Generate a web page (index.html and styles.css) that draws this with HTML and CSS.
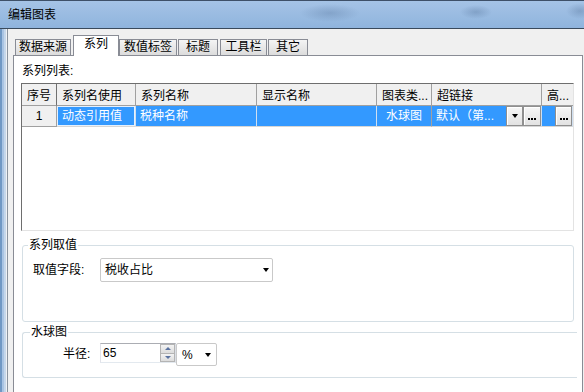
FILE: index.html
```html
<!DOCTYPE html>
<html lang="zh-CN">
<head>
    <meta charset="UTF-8">
    <title>编辑图表</title>
    <link rel="stylesheet" href="styles.css">
</head>
<body>
    <div class="titlebar"><span class="title">编辑图表</span></div>
    <div class="frame">
        <div class="frame-edge"></div>
        <div class="client">
            <div class="tabs">
                <div class="tab t1">数据来源</div>
                <div class="tab t2 active">系列</div>
                <div class="tab t3">数值标签</div>
                <div class="tab t4">标题</div>
                <div class="tab t5">工具栏</div>
                <div class="tab t6">其它</div>
            </div>
            <div class="tab-panel">
                <div class="list-label">系列列表:</div>
                <div class="grid">
                    <div class="row head">
                        <div class="cell first">序号</div>
                        <div class="cell">系列名使用</div>
                        <div class="cell">系列名称</div>
                        <div class="cell">显示名称</div>
                        <div class="cell">图表类...</div>
                        <div class="cell">超链接</div>
                        <div class="cell last">高...</div>
                    </div>
                    <div class="row data">
                        <div class="cell num">1</div>
                        <div class="cell focus">动态引用值</div>
                        <div class="cell">税种名称</div>
                        <div class="cell"></div>
                        <div class="cell center">水球图</div>
                        <div class="cell link">
                            <span class="link-text">默认（第...</span>
                            <span class="btn dd"><span class="tri"></span></span>
                            <span class="btn dots"><i></i><i></i><i></i></span>
                        </div>
                        <div class="cell link last">
                            <span class="link-text"></span>
                            <span class="btn dots"><i></i><i></i><i></i></span>
                        </div>
                    </div>
                </div>

                <fieldset class="group g1">
                    <legend>系列取值</legend>
                    <div class="field f1">
                        <span class="field-label">取值字段:</span>
                        <div class="combo wide"><span>税收占比</span><span class="tri"></span></div>
                    </div>
                </fieldset>

                <fieldset class="group g2">
                    <legend>水球图</legend>
                    <div class="field f2">
                        <span class="field-label">半径:</span>
                        <div class="spin">
                            <span class="spin-value">65</span>
                            <span class="spin-btns">
                                <span class="spin-up"><span class="up"></span></span>
                                <span class="spin-down"><span class="down"></span></span>
                            </span>
                        </div>
                        <div class="combo unit"><span>%</span><span class="tri"></span></div>
                    </div>
                </fieldset>
            </div>
        </div>
    </div>
</body>
</html>
```
FILE: styles.css
```css
* {
    box-sizing: border-box;
}

body {
    margin: 0;
    width: 584px;
    height: 392px;
    overflow: hidden;
    background-color: #f0f0f0;
    font-family: "Liberation Sans", "Noto Sans CJK SC", sans-serif;
    font-size: 12px;
    line-height: 14px;
    color: #000;
}

/* window title */
.titlebar {
    height: 29px;
    padding: 7px 0 0 8px;
    border-top: 1px solid #3e5068;
    border-bottom: 1px solid #3a4a5c;
    background:
        radial-gradient(ellipse 30px 9px at 330px 12px, rgba(60, 90, 130, 0.25), transparent),
        radial-gradient(ellipse 16px 7px at 476px 11px, rgba(60, 90, 130, 0.28), transparent),
        radial-gradient(ellipse 14px 8px at 580px 10px, rgba(60, 90, 130, 0.28), transparent),
        linear-gradient(#a5c3e6, #8fb4dd);
}

.frame {
    display: flex;
    height: 363px;
}

.frame-edge {
    width: 8px;
    background: linear-gradient(to right,
        #7098c4 0, #7098c4 2px,
        #a9c4e3 2px, #a9c4e3 4px,
        #c6d7ea 4px, #c6d7ea 6px,
        #eef1f5 6px, #eef1f5 7px,
        #8a939e 7px);
}

.client {
    flex: 1;
    padding: 6px 1px 0 5px;
}

/* tabs */
.tabs {
    display: flex;
    align-items: flex-end;
    height: 20px;
    padding-left: 2px;
    position: relative;
    z-index: 1;
}

.tab {
    height: 16px;
    border: 1px solid #898c95;
    border-bottom: none;
    background: linear-gradient(#f4f4f4, #dcdcdc);
    text-align: center;
    white-space: nowrap;
}

.tab.active {
    height: 21px;
    margin-bottom: -1px;
    padding-top: 1px;
    background: #fff;
}

.t1 { width: 56px; }
.t2 { width: 46px; margin-left: 2px; }
.t3 { width: 58px; }
.t4 { width: 40px; margin-left: 1px; }
.t5 { width: 47px; margin-left: 2px; }
.t6 { width: 40px; margin-left: 1px; }

.tab-panel {
    height: 340px;
    border: 1px solid #898c95;
    background: #fff;
    padding: 8px 0 0 7px;
}

.list-label {
    height: 14px;
    margin: 0 0 5px 1px;
}

/* series grid */
.grid {
    width: 553px;
    height: 148px;
    border: 1px solid;
    border-color: #6e6e6e #e3e3e3 #e3e3e3 #6e6e6e;
    background: #fff;
}

.row {
    display: grid;
    grid-template-columns: 35px 79px 121px 120px 55px 110px 1fr;
}

.cell {
    white-space: nowrap;
    overflow: hidden;
}

.head .cell {
    height: 22px;
    padding: 5px 0 0 5px;
    background: #f0f0f0;
    border-right: 1px solid #a0a0a0;
    border-bottom: 1px solid #a0a0a0;
}

.head .first {
    border-right-color: #707070;
}

.head .last,
.data .last {
    border-right: none;
}

.data .cell {
    height: 21px;
    padding: 3px 0 0 4px;
    background: #3399ff;
    color: #fff;
    border-right: 1px solid #cfdff0;
    border-bottom: 1px solid #d6d6d6;
}

.data .num {
    padding-left: 0;
    text-align: center;
    background: #f0f0f0;
    color: #000;
    border-right-color: #a0a0a0;
    border-bottom-color: #a0a0a0;
}

.data .focus {
    padding-left: 5px;
    box-shadow: inset 0 0 0 1px #e6f1fd;
}

.data .center {
    padding-left: 0;
    text-align: center;
    border-right-color: #a0a0a0;
}

.data .link {
    display: flex;
    padding: 0;
}

.link-text {
    flex: 1;
    padding: 3px 0 0 4px;
    overflow: hidden;
}

.btn {
    display: flex;
    align-items: center;
    justify-content: center;
    height: 20px;
    background: linear-gradient(#f6f6f6, #e2e2e2);
    border: 1px solid #8f8f8f;
    box-shadow: inset 1px 1px 0 #fff;
}

.dd {
    width: 17px;
}

.dots {
    width: 18px;
    gap: 1px;
    align-items: flex-end;
    padding-bottom: 5px;
}

.dots i {
    width: 2px;
    height: 2px;
    background: #000;
}

.last .dots {
    width: 17px;
}

.tri {
    width: 0;
    height: 0;
    border-top: 4px solid #000;
    border-left: 3.5px solid transparent;
    border-right: 3.5px solid transparent;
}

/* group boxes */
.group {
    margin: 0;
    padding: 0;
    border: 1px solid #d5dfe5;
    border-radius: 3px;
}

.group legend {
    margin-left: 5px;
    padding: 0 1px;
    line-height: 12px;
}

.g1 {
    width: 552px;
    margin: 8px 0 0 1px;
    padding-bottom: 39px;
}

.g2 {
    width: 555px;
    margin: 4px 0 0 1px;
    padding-bottom: 11px;
    border-right: none;
    border-radius: 3px 0 0 3px;
}

.g2 legend {
    margin-left: 7px;
}

.field {
    display: flex;
}

.f1 {
    align-items: center;
    margin-top: 7px;
    padding-left: 10px;
}

.f1 .field-label {
    width: 67px;
}

.f2 {
    align-items: flex-start;
    margin-top: 5px;
    padding-left: 40px;
}

.f2 .field-label {
    width: 37px;
    margin-top: 4px;
}

.combo {
    display: flex;
    align-items: center;
    justify-content: space-between;
    background: #fff;
    border: 1px solid #c9c9c9;
    border-radius: 2px;
}

.combo.wide {
    width: 173px;
    height: 24px;
    padding: 0 3px 0 4px;
}

.combo.unit {
    width: 41px;
    height: 23px;
    padding: 0 5px 0 5px;
}

.spin {
    display: flex;
    width: 76px;
    height: 20px;
    border: 1px solid;
    border-color: #abadb3 #dbdfe6 #e3e9ef #e2e3ea;
    background: #fff;
}

.spin-value {
    flex: 1;
    padding: 2px 0 0 2px;
}

.spin-btns {
    display: flex;
    flex-direction: column;
    width: 15px;
}

.spin-up,
.spin-down {
    flex: 1;
    display: flex;
    align-items: center;
    justify-content: center;
    background: linear-gradient(#f3f3f3, #dcdcdc);
    border: 1px solid #b4b4b4;
}

.spin-down {
    border-top: none;
}

.up,
.down {
    width: 0;
    height: 0;
    border-left: 3px solid transparent;
    border-right: 3px solid transparent;
}

.up {
    border-bottom: 3px solid #5a72a0;
}

.down {
    border-top: 3px solid #5a72a0;
}
```
